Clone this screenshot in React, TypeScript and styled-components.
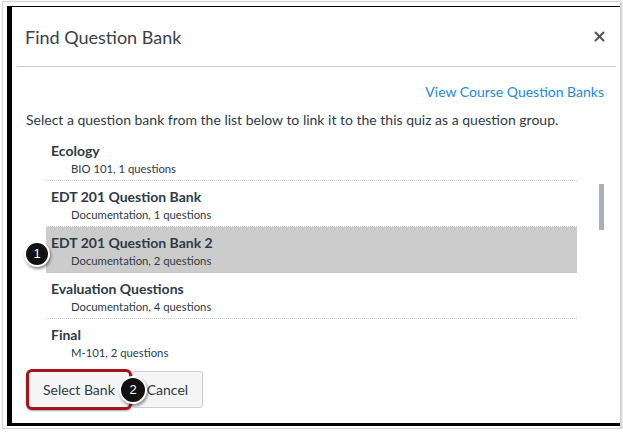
import styled, { createGlobalStyle } from "styled-components";

const GlobalStyle = createGlobalStyle`
  body {
    margin: 0;
    background: #ffffff;
    font-family: Lato, "Open Sans", sans-serif;
    color: #2d3b45;
  }
`;

const Frame = styled.div`
  box-sizing: border-box;
  width: 619px;
  height: 428px;
  margin: 1px 0 0 2px;
  padding: 4px 3px 2px 4px;
  border: 1px solid #d2d2d2;
  box-shadow: 1px 1px 2px rgba(0, 0, 0, 0.22);
  display: flex;
`;

const Dialog = styled.div`
  flex: 1;
  display: flex;
  flex-direction: column;
  background: #ffffff;
  border-top: 1px solid #000;
  border-left: 5px solid #000;
  border-bottom: 3px solid #000;
`;

const Header = styled.header`
  box-sizing: border-box;
  height: 60px;
  margin: 0 4px 0 5px;
  padding: 0 11px 0 8px;
  display: flex;
  align-items: center;
  justify-content: space-between;
  border-bottom: 1px solid #c7cdd1;
`;

const Title = styled.h2`
  margin: 0;
  font-size: 18px;
  font-weight: 400;
  color: #3a4248;
`;

const CloseButton = styled.button`
  padding: 0;
  border: 0;
  background: transparent;
  color: #4d5358;
  display: flex;
  cursor: pointer;
`;

const Body = styled.div`
  flex: 1;
  display: flex;
  flex-direction: column;
  padding: 15px 16px 0 14px;
`;

const LinkRow = styled.div`
  display: flex;
  justify-content: flex-end;
  line-height: 20px;
`;

const BankLink = styled.a`
  font-size: 14px;
  color: #1b8ad8;
  text-decoration: none;
`;

const Intro = styled.p`
  margin: 8px 0 0;
  font-size: 14px;
  line-height: 20px;
  color: #2d3b45;
`;

const ListArea = styled.div`
  display: flex;
  margin: 5px 0 0 20px;
`;

const List = styled.ul`
  width: 531px;
  margin: 0;
  padding: 0;
  list-style: none;
`;

const Row = styled.li<{ $selected?: boolean }>`
  position: relative;
  box-sizing: border-box;
  height: 46px;
  padding: 7px 0 0 5px;
  border-bottom: 1px dotted #c4c4c4;
  background: ${(p) => (p.$selected ? "#cccccc" : "transparent")};

  &:last-child {
    border-bottom: 0;
  }
`;

const RowTitle = styled.div`
  font-size: 14px;
  font-weight: 700;
  line-height: 18px;
  color: #2d3b45;
`;

const RowSub = styled.div`
  margin-top: 1px;
  padding-left: 20px;
  font-size: 11.3px;
  line-height: 15px;
  color: #2d3b45;
`;

const ScrollTrack = styled.div`
  width: 5px;
  margin-left: 22px;
  padding-top: 49px;
`;

const Thumb = styled.div`
  height: 46px;
  background: #a9b0b6;
`;

const Footer = styled.div`
  display: flex;
  align-items: center;
  padding-top: 4px;
`;

const ButtonWrap = styled.div`
  position: relative;
  display: flex;
`;

const Button = styled.button<{ $flagged?: boolean }>`
  box-sizing: border-box;
  height: ${(p) => (p.$flagged ? "41px" : "37px")};
  padding: 0 14px;
  font-family: Lato, "Open Sans", sans-serif;
  font-size: 14px;
  color: #2d3b45;
  background: #f5f5f5;
  border: ${(p) => (p.$flagged ? "3px solid #a3151b" : "1px solid #c7cdd1")};
  border-radius: ${(p) => (p.$flagged ? "6px" : "3px")};
  box-shadow: ${(p) => (p.$flagged ? "0 1px 2px rgba(0,0,0,0.35)" : "none")};
`;

const Badge = styled.span<{ $size: number }>`
  position: absolute;
  z-index: 2;
  top: 50%;
  transform: translateY(-50%);
  box-sizing: border-box;
  width: ${(p) => p.$size}px;
  height: ${(p) => p.$size}px;
  border-radius: 50%;
  border: 2px solid #ffffff;
  background: #111111;
  color: #ffffff;
  font-family: "Liberation Sans", Arial, sans-serif;
  font-size: 13px;
  display: flex;
  align-items: center;
  justify-content: center;
  box-shadow: 1px 2px 3px rgba(0, 0, 0, 0.45);
`;

const RowBadge = styled(Badge)`
  left: -22px;
  top: calc(50% + 4px);
`;

const ButtonBadge = styled(Badge)`
  left: 93px;
`;

const banks = [
  { title: "Ecology", sub: "BIO 101, 1 questions" },
  { title: "EDT 201 Question Bank", sub: "Documentation, 1 questions" },
  { title: "EDT 201 Question Bank 2", sub: "Documentation, 2 questions", selected: true },
  { title: "Evaluation Questions", sub: "Documentation, 4 questions" },
  { title: "Final", sub: "M-101, 2 questions" },
];

export default function App() {
  return (
    <>
      <GlobalStyle />
      <Frame>
        <Dialog>
          <Header>
            <Title>Find Question Bank</Title>
            <CloseButton aria-label="Close">
              <svg width="11" height="11" viewBox="0 0 11 11">
                <path d="M1.5 1.5 L9.5 9.5 M9.5 1.5 L1.5 9.5" stroke="currentColor" strokeWidth="2" strokeLinecap="round" />
              </svg>
            </CloseButton>
          </Header>
          <Body>
            <LinkRow>
              <BankLink href="#">View Course Question Banks</BankLink>
            </LinkRow>
            <Intro>
              Select a question bank from the list below to link it to the this quiz as a question group.
            </Intro>
            <ListArea>
              <List>
                {banks.map((b) => (
                  <Row key={b.title} $selected={b.selected}>
                    {b.selected && <RowBadge $size={26}>1</RowBadge>}
                    <RowTitle>{b.title}</RowTitle>
                    <RowSub>{b.sub}</RowSub>
                  </Row>
                ))}
              </List>
              <ScrollTrack>
                <Thumb />
              </ScrollTrack>
            </ListArea>
            <Footer>
              <ButtonWrap>
                <Button $flagged>Select Bank</Button>
                <ButtonBadge $size={28}>2</ButtonBadge>
              </ButtonWrap>
              <Button>Cancel</Button>
            </Footer>
          </Body>
        </Dialog>
      </Frame>
    </>
  );
}
